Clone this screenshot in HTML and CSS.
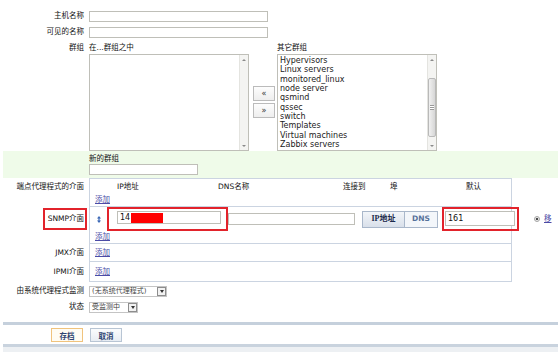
FILE: index.html
```html
<!DOCTYPE html>
<html lang="zh">
<head>
    <meta charset="UTF-8">
    <title>主机配置</title>
    <link rel="stylesheet" href="styles.css">
</head>
<body>
    <div class="page">
        <div class="row row-text">
            <div class="lbl">主机名称</div>
            <div><input class="text name-input" type="text"></div>
        </div>
        <div class="row row-text">
            <div class="lbl">可见的名称</div>
            <div><input class="text name-input" type="text"></div>
        </div>

        <div class="row row-groups">
            <div class="lbl">群组</div>
            <div class="groups">
                <div class="group-col">
                    <div class="group-head">在...群组之中</div>
                    <div class="listbox">
                        <ul class="options"></ul>
                        <div class="scroll">
                            <span class="arr up"></span>
                            <span class="fill"></span>
                            <span class="arr down"></span>
                        </div>
                    </div>
                </div>
                <div class="move-btns">
                    <button class="move">&laquo;</button>
                    <button class="move">&raquo;</button>
                </div>
                <div class="group-col">
                    <div class="group-head">其它群组</div>
                    <div class="listbox">
                        <ul class="options">
                            <li>Hypervisors</li>
                            <li>Linux servers</li>
                            <li>monitored_linux</li>
                            <li>node server</li>
                            <li>qsmind</li>
                            <li>qssec</li>
                            <li>switch</li>
                            <li>Templates</li>
                            <li>Virtual machines</li>
                            <li>Zabbix servers</li>
                        </ul>
                        <div class="scroll">
                            <span class="arr up"></span>
                            <span class="thumb"><i></i></span>
                            <span class="fill"></span>
                            <span class="arr down"></span>
                        </div>
                    </div>
                </div>
            </div>
        </div>

        <div class="row new-group">
            <div></div>
            <div>
                <div class="new-group-title">新的群组</div>
                <input class="text new-group-input" type="text">
            </div>
        </div>

        <!-- interfaces -->
        <div class="row iface-row">
            <div class="lbl lbl-agent">端点代理程式的介面</div>
            <div class="iface-box first">
                <div class="iface-head">
                    <span class="h-ip">IP地址</span><span class="h-dns">DNS名称</span><span class="h-conn">连接到</span><span class="h-port">埠</span><span>默认</span>
                </div>
                <div class="add-line"><a class="add" href="#">添加</a></div>
            </div>
        </div>
        <div class="row iface-row">
            <div class="lbl lbl-snmp"><span class="mark mark-label">SNMP介面</span></div>
            <div class="iface-box">
                <div class="iface">
                    <svg class="handle" width="4" height="7" viewBox="0 0 4 7">
                        <path d="M2 0 L4 2.4 H2.6 V4.6 H4 L2 7 L0 4.6 H1.4 V2.4 H0 Z" fill="#3a66b5"/>
                    </svg>
                    <span class="mark mark-ip">
                        <span class="field ip-field">14<span class="redact"></span></span>
                    </span>
                    <span class="field dns-field"></span>
                    <span class="conn">
                        <span class="conn-ip">IP地址</span><span class="conn-dns">DNS</span>
                    </span>
                    <span class="mark mark-port">
                        <span class="field port-field">161</span>
                    </span>
                    <span class="radio"></span>
                    <a class="add remove" href="#">移</a>
                </div>
                <div class="add-line"><a class="add" href="#">添加</a></div>
            </div>
        </div>
        <div class="row iface-row">
            <div class="lbl lbl-jmx">JMX介面</div>
            <div class="iface-box">
                <div class="add-line add-jmx"><a class="add" href="#">添加</a></div>
            </div>
        </div>
        <div class="row iface-row">
            <div class="lbl lbl-ipmi">IPMI介面</div>
            <div class="iface-box">
                <div class="add-line add-ipmi"><a class="add" href="#">添加</a></div>
            </div>
        </div>

        <div class="row row-select first-select">
            <div class="lbl">由系统代理程式监测</div>
            <div><span class="select sel-proxy"><span class="sel-text">(无系统代理程式)</span><span class="sel-btn"></span></span></div>
        </div>
        <div class="row row-select">
            <div class="lbl">状态</div>
            <div><span class="select sel-status"><span class="sel-text">受监测中</span><span class="sel-btn"></span></span></div>
        </div>

        <div class="footer">
            <button class="btn btn-save">存档</button>
            <button class="btn">取消</button>
        </div>
        <div class="footer-under"></div>
    </div>
</body>
</html>
```

FILE: styles.css
```css
* {
    box-sizing: border-box;
    margin: 0;
    padding: 0;
}

body {
    font-family: "DejaVu Sans", "Noto Sans CJK SC", sans-serif;
    font-size: 7.5px;
    line-height: 10px;
    color: #111;
    background: #fff;
}

.page {
    margin-left: 3px;
    padding-top: 8px;
}

.row {
    display: grid;
    grid-template-columns: 81px 1fr;
    column-gap: 5px;
}

.lbl {
    text-align: right;
    white-space: nowrap;
}

/* text inputs */
.text {
    display: block;
    height: 11px;
    border: 1px solid #bfbfb8;
    background: #fff;
    font: inherit;
    font-size: 8px;
    padding: 0 2px;
}

.row-text {
    height: 16px;
    align-items: center;
}

.name-input {
    width: 179px;
}

/* groups */
.row-groups {
    margin-top: 2px;
}

.row-groups .lbl,
.group-head {
    height: 12px;
    line-height: 12px;
}

.groups {
    display: flex;
}

.group-col {
    width: 160px;
}

.listbox {
    display: flex;
    height: 97px;
    border: 1px solid #bfbfb8;
    background: #fff;
}

.options {
    flex: 1;
    list-style: none;
    padding: 1px 2px 0;
    font-size: 8px;
    line-height: 9.33px;
    color: #222;
}

.scroll {
    display: flex;
    flex-direction: column;
    width: 9px;
    background: #f4f4f2;
    border-left: 1px solid #e4e4e0;
}

.fill {
    flex: 1;
}

.arr {
    display: flex;
    height: 9px;
    align-items: center;
    justify-content: center;
}

.arr::before {
    content: "";
    border-left: 2px solid transparent;
    border-right: 2px solid transparent;
}

.arr.up::before {
    border-bottom: 2px solid #8a8a8a;
}

.arr.down::before {
    border-top: 2px solid #8a8a8a;
}

.thumb {
    display: flex;
    align-items: center;
    justify-content: center;
    height: 59px;
    margin-top: 14px;
    border: 1px solid #b9b9b9;
    border-radius: 2px;
    background: linear-gradient(90deg, #f0f0f0, #d6d6d6);
}

.thumb i {
    width: 4px;
    height: 5px;
    border-top: 1px solid #999;
    border-bottom: 1px solid #999;
    background: linear-gradient(#fff 0 1px, #999 1px 2px, #fff 2px);
    background-size: 100% 3px;
}

.move-btns {
    display: flex;
    flex-direction: column;
    gap: 2px;
    margin: 44px 2px 0 4px;
}

.move {
    width: 22px;
    height: 15px;
    border: 1px solid #bbb;
    background: linear-gradient(#fdfdfd, #eeeeee);
    font-family: "DejaVu Sans", sans-serif;
    font-size: 8px;
    color: #333;
}

/* new group band */
.new-group {
    background: #effbe9;
    padding: 2px 0 3px;
}

.new-group-title {
    height: 11px;
    line-height: 11px;
}

.new-group-input {
    width: 109px;
}

/* interfaces */
.iface-row {
    align-items: start;
}

.iface-box {
    width: 423px;
    border-left: 1px solid #cbd4e1;
    border-right: 1px solid #cbd4e1;
    border-bottom: 1px solid #cbd4e1;
}

.iface-box.first {
    border-top: 1px solid #cbd4e1;
}

.lbl-agent {
    padding-top: 1px;
    line-height: 15px;
}

.lbl-snmp {
    display: flex;
    height: 24px;
    align-items: center;
    justify-content: flex-end;
}

.lbl-jmx {
    line-height: 17px;
}

.lbl-ipmi {
    line-height: 19px;
}

.iface-head {
    height: 15px;
    line-height: 15px;
    padding-left: 27px;
    white-space: nowrap;
}

.iface-head span {
    display: inline-block;
}

.h-ip { width: 101px; }
.h-dns { width: 125px; }
.h-conn { width: 47px; }
.h-port { width: 76px; }

.add-line {
    height: 12px;
    line-height: 12px;
    padding-left: 5px;
}

.add-jmx {
    height: 17px;
    line-height: 17px;
}

.add-ipmi {
    height: 19px;
    line-height: 19px;
}

.add {
    color: #4b4ba6;
    text-decoration: underline;
}

.mark {
    border: 2px solid #e2232b;
}

.mark-label {
    display: inline-block;
    padding: 4px 1px 4px 3px;
    margin-right: -3px;
}

.iface {
    display: flex;
    align-items: center;
    height: 24px;
    padding-left: 7px;
}

.iface > * {
    flex: none;
}

.handle {
    margin-right: 6px;
}

.field {
    display: flex;
    align-items: center;
    height: 12px;
    border: 1px solid #bfbfb8;
    background: #fff;
    font-size: 8px;
    padding-left: 2px;
}

.mark-ip {
    display: block;
    width: 121px;
    padding: 2px 5px 5px 8px;
}

.ip-field {
    width: 104px;
    height: 13px;
}

.redact {
    display: inline-block;
    width: 32px;
    height: 10px;
    margin-left: 1px;
    background: #ff0000;
}

.dns-field {
    width: 127px;
}

.conn {
    display: flex;
    height: 17px;
    margin-left: 7px;
    border: 1px solid #a9b7ca;
    font-weight: bold;
}

.conn span {
    display: flex;
    align-items: center;
    justify-content: center;
}

.conn-ip {
    width: 42px;
    border-right: 1px solid #a9b7ca;
    background: linear-gradient(#f2f5f9, #d9e0ea);
    color: #1c2a4c;
    font-family: "Liberation Serif", "Noto Sans CJK SC", serif;
    font-size: 8px;
}

.conn-dns {
    width: 32px;
    background: #f3f6fa;
    color: #56719a;
}

.mark-port {
    display: block;
    margin-left: 4px;
    padding: 2px 2px 3px 1px;
}

.port-field {
    width: 70px;
    height: 15px;
}

.radio {
    width: 6px;
    height: 6px;
    margin-left: 15px;
    border: 1px solid #a5a5a5;
    border-radius: 50%;
    background: radial-gradient(#4a4a4a 0 1px, #e8e8e8 1.5px);
}

.remove {
    margin-left: 4px;
}

/* selects */
.row-select {
    height: 16px;
    align-items: center;
}

.first-select {
    margin-top: 1px;
}

.select {
    display: flex;
    align-items: center;
    height: 11px;
    border: 1px solid #c4c4c4;
    padding-left: 2px;
    white-space: nowrap;
}

.sel-text {
    flex: 1;
    font-size: 7px;
    color: #444;
}

.sel-btn {
    display: flex;
    align-items: center;
    justify-content: center;
    width: 9px;
    height: 9px;
    border: 1px solid #8d8d8d;
    background: #f2f2f2;
}

.sel-btn::before {
    content: "";
    border-left: 2.5px solid transparent;
    border-right: 2.5px solid transparent;
    border-top: 3px solid #333;
}

.sel-proxy {
    width: 78px;
}

.sel-status {
    width: 49px;
}

/* footer */
.footer {
    display: flex;
    gap: 7px;
    margin-top: 7px;
    padding: 3px 0 2px 48px;
    border-top: 3px solid #c5d0dc;
    border-bottom: 3px solid #c9d3de;
}

.btn {
    width: 32px;
    height: 14px;
    border: 1px solid #b8c5d4;
    background: linear-gradient(#fbfcfd, #e8edf3);
    font-family: "Noto Sans CJK SC", sans-serif;
    font-size: 7.5px;
    font-weight: bold;
    color: #2e4470;
}

.btn-save {
    border-color: #f0c37d;
    background: #fffcf3;
}

.footer-under {
    height: 10px;
    background: #edf0f3;
}
```
